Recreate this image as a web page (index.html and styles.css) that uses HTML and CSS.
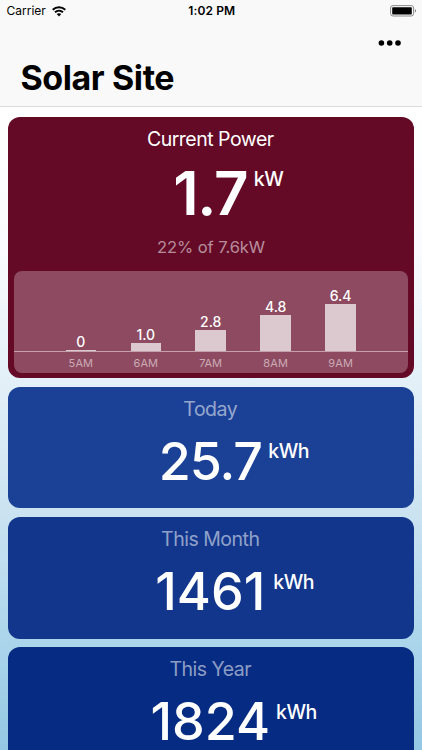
FILE: index.html
```
<!DOCTYPE html>
<html lang="en">
<head>
<meta charset="utf-8">
<title>Solar Site</title>
<link rel="stylesheet" href="styles.css">
</head>
<body>
<header class="header">
  <div class="status">
    <div class="carrier"><span>Carrier</span>
      <svg class="wifi" width="14" height="11" viewBox="0 0 14 11"><path d="M.7 3.7C4.3.4 9.7.4 13.3 3.7M3 6.3c2.3-2.1 5.7-2.1 8 0" fill="none" stroke="#000" stroke-width="1.9"/><path d="M4.7 8.1c1.3-1.2 3.3-1.2 4.6 0L7 10.4z"/></svg>
    </div>
    <div class="time">1:02 PM</div>
    <svg class="battery" width="27" height="12" viewBox="0 0 27 12"><rect x=".6" y=".6" width="23" height="10.4" rx="2.4" fill="none" stroke="#8a8a8a"/><rect x="2.2" y="2.2" width="19.6" height="7.4" rx=".8"/><path d="M24.9 4c1.6.5 1.6 3.1 0 3.6z" fill="#8a8a8a"/></svg>
  </div>
  <div class="toolbar"><svg width="24" height="6" viewBox="0 0 24 6"><circle cx="3.4" cy="3" r="2.8"/><circle cx="11.7" cy="3" r="2.8"/><circle cx="20" cy="3" r="2.8"/></svg></div>
  <h1 class="title">Solar Site</h1>
</header>
<main class="cards">
  <section class="card power">
    <h2 class="label">Current Power</h2>
    <div class="reading"><span class="value">1.7</span><span class="unit">kW</span></div>
    <p class="share">22% of 7.6kW</p>
    <div class="chart">
      <div class="bars">
        <div class="column"><span>0</span><i class="bar" style="height:0.5px"></i></div>
        <div class="column"><span>1.0</span><i class="bar" style="height:7.5px"></i></div>
        <div class="column"><span>2.8</span><i class="bar" style="height:21px"></i></div>
        <div class="column"><span>4.8</span><i class="bar" style="height:36px"></i></div>
        <div class="column"><span>6.4</span><i class="bar" style="height:47px"></i></div>
      </div>
      <div class="hours"><span>5AM</span><span>6AM</span><span>7AM</span><span>8AM</span><span>9AM</span></div>
    </div>
  </section>
  <section class="card energy today">
    <h2 class="label">Today</h2>
    <div class="reading"><span class="value">25.7</span><span class="unit">kWh</span></div>
  </section>
  <section class="card energy month">
    <h2 class="label">This Month</h2>
    <div class="reading"><span class="value">1461</span><span class="unit">kWh</span></div>
  </section>
  <section class="card energy year">
    <h2 class="label">This Year</h2>
    <div class="reading"><span class="value">1824</span><span class="unit">kWh</span></div>
  </section>
</main>
</body>
</html>
```
FILE: styles.css
```
* { box-sizing: border-box; }
body {
  margin: 0;
  height: 750px;
  overflow: hidden;
  font-family: Inter, "Liberation Sans", sans-serif;
  background: linear-gradient(#fff 106px, #f8fbfd 260px, #e3f0f8 380px, #cbe3f1 512px, #abd5eb 643px, #93c7e3 750px);
}
.header {
  height: 107px;
  background: #f9f9f9;
  border-bottom: 1px solid #dcdcdc;
}
.status {
  height: 22px;
  display: grid;
  grid-template-columns: 1fr auto 1fr;
  align-items: center;
  padding: 0 5px 0 6.5px;
  font-size: 12px;
  line-height: 22px;
}
.carrier { display: flex; align-items: center; gap: 6px; }
.time { font-weight: 600; letter-spacing: 0.1px; }
.battery { justify-self: end; }
.toolbar {
  height: 42px;
  display: flex;
  justify-content: flex-end;
  align-items: center;
  padding-right: 20px;
}
.title {
  margin: -8px 0 0 20.4px;
  font-size: 34px;
  line-height: 44px;
  font-weight: 700;
  letter-spacing: -0.4px;
}
.cards {
  display: grid;
  gap: 8.4px;
  padding: 9.9px 8.4px 0;
}
.card {
  border-radius: 12px;
  color: #fff;
  text-align: center;
}
.power { height: 261.4px; background: #640a27; padding: 10px 5.5px 0; }
.energy { height: 121.8px; padding-top: 10.2px; }
.today { background: #1b4196; }
.month { background: #11368c; }
.year { background: #062b82; }
.label {
  margin: 0;
  padding-right: 1.5px;
  font-size: 19.5px;
  line-height: 24px;
  font-weight: 400;
  letter-spacing: -0.5px;
}
.energy .label { color: rgba(255, 255, 255, 0.55); }
.reading {
  display: grid;
  grid-template-columns: 1fr auto 1fr;
  padding-right: 1.5px;
}
.value { grid-column: 2; }
.unit {
  justify-self: start;
  margin-left: 6.5px;
  font-size: 19.5px;
  font-weight: 500;
  line-height: 24px;
  letter-spacing: -0.5px;
}
.power .value {
  margin-top: 7px;
  font-size: 60px;
  line-height: 70px;
  font-weight: 600;
  letter-spacing: -1.2px;
}
.power .unit { margin-top: 16px; }
.energy .value {
  margin-top: 15px;
  font-size: 52px;
  line-height: 52px;
  font-weight: 500;
}
.energy .unit { margin-top: 18.5px; }
.today .value { letter-spacing: -1.1px; }
.month .unit { margin-left: 8px; }
.year .unit { margin-left: 6px; }
.share {
  margin: 8px 0 0;
  font-size: 16.5px;
  line-height: 22px;
  letter-spacing: -0.05px;
  color: rgba(255, 255, 255, 0.55);
}
.chart {
  height: 102px;
  margin-top: 13.5px;
  border-radius: 8px;
  background: #8d4a60;
}
.bars {
  height: 80.2px;
  display: flex;
  align-items: flex-end;
  border-bottom: 1px solid #c5a0ad;
  padding: 0 35px 0 34.5px;
}
.column {
  flex: 1;
  display: flex;
  flex-direction: column;
  align-items: center;
  font-size: 14px;
  line-height: 17px;
  font-weight: 500;
}
.bar { width: 30.5px; background: #dcc8cf; }
.hours {
  display: flex;
  padding: 0 35px 0 34.5px;
  font-size: 11px;
  line-height: 22px;
  letter-spacing: 0.1px;
  color: #cbaab6;
}
.hours span { flex: 1; }
```
